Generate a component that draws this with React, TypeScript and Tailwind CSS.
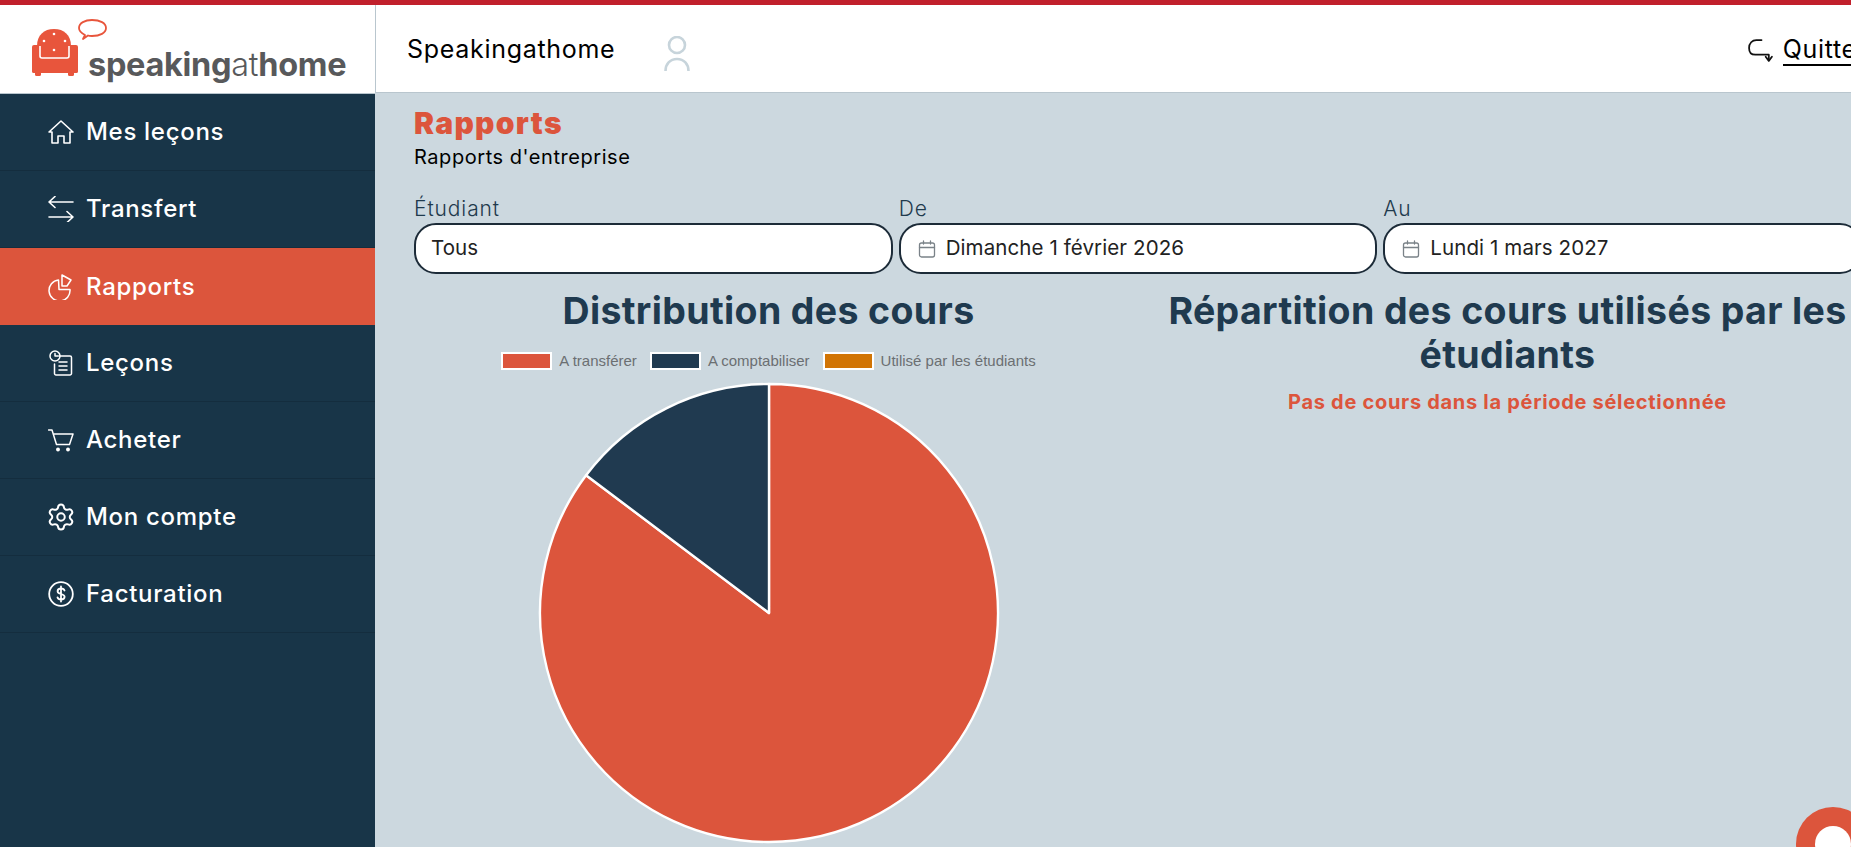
import React from "react";
import { Settings } from "lucide-react";

const iconClass = "w-[26px] h-[26px] flex-none";

function HomeIcon() {
  return (
    <svg viewBox="0 0 26 26" fill="none" stroke="currentColor" strokeWidth="1.6" strokeLinejoin="round" strokeLinecap="round" className={iconClass}>
      <path d="M1 13 L13 2 L25 13 H22 V24 H16 V17 H10 V24 H4 V13 Z" />
    </svg>
  );
}

function TransferIcon() {
  return (
    <svg viewBox="0 0 26 26" fill="none" stroke="currentColor" strokeWidth="1.6" strokeLinecap="round" strokeLinejoin="round" className={iconClass}>
      <path d="M1 6 H25 M7 0.5 L1 6 L7 11.5" />
      <path d="M1 21 H25 M19 15.5 L25 21 L19 26.5" />
    </svg>
  );
}

function PieIcon() {
  return (
    <svg viewBox="0 0 26 26" fill="none" stroke="currentColor" strokeWidth="1.5" strokeLinejoin="round" className={iconClass}>
      <path d="M10.5 6 A10.5 10.5 0 1 0 22 15.5 H11 Z" />
      <path d="M14 1 L23 6 L19 12 L14 12 Z" />
    </svg>
  );
}

function LessonIcon() {
  return (
    <svg viewBox="0 0 26 26" fill="none" stroke="currentColor" strokeWidth="1.5" strokeLinecap="round" strokeLinejoin="round" className={iconClass}>
      <path d="M11 6 H22 A1.5 1.5 0 0 1 23.5 7.5 V23.5 A1.5 1.5 0 0 1 22 25 H8 A1.5 1.5 0 0 1 6.5 23.5 V14" />
      <circle cx="7" cy="6" r="5" />
      <path d="M7 3.5 V6 H10" />
      <path d="M11 12 H19 M11 16 H19 M11 20 H19" />
    </svg>
  );
}

function CartIcon() {
  return (
    <svg viewBox="0 0 26 26" fill="none" stroke="currentColor" strokeWidth="1.5" strokeLinecap="round" strokeLinejoin="round" className={iconClass}>
      <path d="M0.5 3 H4 L8.5 17.5 H21.5 L25 7 H5.5" />
      <circle cx="10" cy="22.5" r="1.2" fill="currentColor" />
      <circle cx="20" cy="22.5" r="1.2" fill="currentColor" />
    </svg>
  );
}

function DollarIcon() {
  return (
    <svg viewBox="0 0 26 26" fill="none" stroke="currentColor" strokeWidth="1.8" strokeLinecap="round" className={iconClass}>
      <circle cx="13" cy="13" r="11.8" />
      <path d="M16.5 9.5 C16 8 14.5 7.5 13 7.5 C11 7.5 9.6 8.6 9.6 10.2 C9.6 13.8 16.6 12.2 16.6 15.8 C16.6 17.4 15 18.5 13 18.5 C11.3 18.5 10 17.8 9.5 16.4 M13 5.5 V20.5" />
    </svg>
  );
}

function CalendarIcon() {
  return (
    <svg viewBox="0 0 18 18" fill="none" stroke="#7a8288" strokeWidth="1.3" strokeLinecap="round" className="ml-[2px] w-[18px] h-[18px] flex-none">
      <rect x="1.5" y="3" width="15" height="14" rx="2" />
      <path d="M1.5 7.5 H16.5 M5.5 1 V4 M12.5 1 V4" />
    </svg>
  );
}

const navItems = [
  { label: "Mes leçons", icon: <HomeIcon /> },
  { label: "Transfert", icon: <TransferIcon /> },
  { label: "Rapports", icon: <PieIcon />, active: true },
  { label: "Leçons", icon: <LessonIcon /> },
  { label: "Acheter", icon: <CartIcon /> },
  { label: "Mon compte", icon: <Settings className="w-[30px] h-[30px] -mx-[2px] flex-none" strokeWidth={1.6} /> },
  { label: "Facturation", icon: <DollarIcon /> },
];

function Logo() {
  return (
    <div className="flex items-end h-[89px] pl-[32px] pb-[17px] bg-white border-b border-[#b9c6ce]">
      <svg viewBox="0 0 46 47" className="w-[46px] h-[47px] flex-none overflow-visible">
        <path d="M5 17 C5 6 12 0 22 0 C32 0 39 6 39 17 V30 H5 Z" fill="#e8553c" />
        <rect x="0" y="16" width="8" height="28" rx="2" fill="#e8553c" />
        <rect x="37" y="16" width="9" height="28" rx="2" fill="#e8553c" />
        <rect x="0" y="30" width="46" height="14" rx="2" fill="#e8553c" />
        <rect x="3" y="41" width="6" height="6" rx="1.5" fill="#e8553c" />
        <rect x="36" y="41" width="6" height="6" rx="1.5" fill="#e8553c" />
        <path d="M8 17 V27 Q8 29 10 29 H35 Q37 29 37 27 V17" fill="none" stroke="#fff" strokeWidth="1.6" />
        <circle cx="22" cy="5" r="1.3" fill="#fff" />
        <circle cx="12" cy="12" r="1.3" fill="#fff" />
        <circle cx="33" cy="12" r="1.3" fill="#fff" />
        <circle cx="22" cy="21" r="1.3" fill="#fff" />
        <path d="M53 6 C49 4 47 1 47 -1 C47 -6 53 -9 60 -9 C68 -9 74 -6 74 -1 C74 4 68 7 60 7 C58 7 57 7 56 6.5 L51 10 Z" fill="none" stroke="#e8553c" strokeWidth="1.8" strokeLinejoin="round" />
      </svg>
      <div className="ml-[10px] -mb-[7px] text-[32.5px] leading-[36px] font-bold tracking-[-0.3px] text-[#58595b] whitespace-nowrap">
        speaking<span className="font-light">at</span>home
      </div>
    </div>
  );
}

function Sidebar() {
  return (
    <aside className="w-[375px] flex-none flex flex-col bg-[#183548]">
      <Logo />
      <nav>
        {navItems.map((item) => (
          <div
            key={item.label}
            className={
              item.active
                ? "h-[77px] flex items-center gap-[12px] pl-[48px] bg-[#dc553c] text-white"
                : "h-[77px] flex items-center gap-[12px] pl-[48px] border-b border-[#142d3e] text-white"
            }
          >
            {item.icon}
            <span className="text-[24px] tracking-[0.7px] font-medium">{item.label}</span>
          </div>
        ))}
      </nav>
    </aside>
  );
}

function Header() {
  return (
    <header className="h-[88px] w-[1476px] flex-none bg-white border-l border-b border-[#b9c6ce] overflow-hidden">
      <div className="w-[1491px] h-full flex items-center pl-[31px] pt-[3px]">
        <span className="text-[25px] tracking-[0.7px] text-black">Speakingathome</span>
        <svg viewBox="0 0 26 36" fill="none" stroke="#c7d4db" strokeWidth="2.6" className="ml-[49px] mt-[8px] w-[26px] h-[36px] flex-none">
          <circle cx="13" cy="9" r="8" />
          <path d="M1.5 35 C1.5 28 6 23 13 23 C20 23 24.5 28 24.5 35" />
        </svg>
        <div className="ml-auto flex items-center gap-[9px]">
          <svg viewBox="0 0 26 26" fill="none" stroke="#111" strokeWidth="1.7" strokeLinecap="round" strokeLinejoin="round" className="w-[27px] h-[27px] flex-none">
            <path d="M14 3 H9 C5 3 2 6 2 10.500 C2 15 4 17 8 17 H21 V22.500" />
            <path d="M18 19 L21 23 L24 19" />
          </svg>
          <span className="text-[25px] tracking-[0.7px] text-black border-b-2 border-black leading-[30px]">Quitter</span>
        </div>
      </div>
    </header>
  );
}

function Field({ label, value, date }: { label: string; value: string; date?: boolean }) {
  return (
    <div>
      <div className="text-[21px] leading-[28px] tracking-[0.9px] font-light text-[#1f3a4d]">{label}</div>
      <div className="h-[51px] flex items-center gap-[10px] pl-[15px] bg-white border-2 border-[#1c2b38] rounded-[22px] text-[20.5px] tracking-[0.1px] text-[#222]">
        {date && <CalendarIcon />}
        <span>{value}</span>
      </div>
    </div>
  );
}

function LegendItem({ color, label }: { color: string; label: string }) {
  return (
    <div className="flex items-center gap-[7px]">
      <span className="w-[51px] h-[18px] flex-none border-2 border-white" style={{ backgroundColor: color }} />
      <span className="text-[15px] whitespace-nowrap text-[#6b6f72] [font-family:'Liberation_Sans',sans-serif]">{label}</span>
    </div>
  );
}

function PieChart() {
  return (
    <svg viewBox="0 0 464 464" className="w-[464px] h-[464px] mt-[8px] flex-none">
      <path d="M232 232 L232 3 A229 229 0 1 1 49.1 94.2 Z" fill="#dc553c" stroke="#fff" strokeWidth="2.4" strokeLinejoin="round" />
      <path d="M232 232 L49.1 94.2 A229 229 0 0 1 232 3 Z" fill="#203a50" stroke="#fff" strokeWidth="2.4" strokeLinejoin="round" />
    </svg>
  );
}

export default function App() {
  return (
    <div className="h-[847px] w-[1851px] relative overflow-hidden flex flex-col bg-[#ccd8df] [font-family:Inter,sans-serif]">
      <div className="h-[5px] flex-none bg-[#c1202c]" />
      <div className="flex flex-1 min-h-0">
        <Sidebar />
        <main className="flex-1 min-w-0 flex flex-col">
          <Header />
          <div className="w-[1448px] ml-[39px] flex-none">
            <h1 className="mt-[12px] text-[30px] leading-[36px] tracking-[1.3px] font-black text-[#dc553c]">Rapports</h1>
            <p className="mt-[3px] text-[20px] leading-[26px] tracking-[0.55px] text-black">Rapports d'entreprise</p>

            <div className="mt-[25px] grid grid-cols-3 gap-x-[6px]">
              <Field label="Étudiant" value="Tous" />
              <Field label="De" value="Dimanche 1 février 2026" date />
              <Field label="Au" value="Lundi 1 mars 2027" date />
            </div>

            <div className="mt-[15px] grid grid-cols-2 gap-x-[30px]">
              <section className="flex flex-col items-center">
                <h2 className="text-[37.5px] leading-[44px] font-bold tracking-[0.35px] text-[#1f3a4f] text-center">Distribution des cours</h2>
                <div className="mt-[17px] flex items-center justify-center gap-[13px]">
                  <LegendItem color="#dc553c" label="A transférer" />
                  <LegendItem color="#203a50" label="A comptabiliser" />
                  <LegendItem color="#d17404" label="Utilisé par les étudiants" />
                </div>
                <PieChart />
              </section>
              <section className="text-center">
                <h2 className="text-[37.5px] leading-[44px] font-bold tracking-[0.35px] text-[#1f3a4f]">Répartition des cours utilisés par les étudiants</h2>
                <p className="mt-[12px] text-[20px] leading-[26px] tracking-[0.7px] font-bold text-[#dc553c]">Pas de cours dans la période sélectionnée</p>
              </section>
            </div>
          </div>
        </main>
      </div>
      <div className="absolute left-[1796px] top-[807px] w-[74px] h-[74px] rounded-full bg-[#dc553c] flex items-center justify-center">
        <div className="w-[36px] h-[36px] rounded-full bg-white" />
      </div>
    </div>
  );
}
